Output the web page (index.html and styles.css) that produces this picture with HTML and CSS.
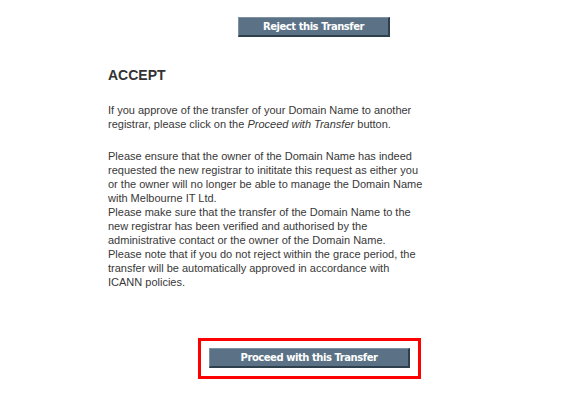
FILE: index.html
```html
<!DOCTYPE html>
<html>
<head>
<meta charset="utf-8">
<link rel="stylesheet" href="styles.css">
</head>
<body>
<div class="page">
  <div class="reject-row">
    <button class="btn btn-reject">Reject this Transfer</button>
  </div>
  <div class="content">
    <h2 class="title">ACCEPT</h2>
    <p class="para">If you approve of the transfer of your Domain Name to another<br>registrar, please click on the <i>Proceed with Transfer</i> button.</p>
    <p class="para">Please ensure that the owner of the Domain Name has indeed<br>requested the new registrar to inititate this request as either you<br>or the owner will no longer be able to manage the Domain Name<br>with Melbourne IT Ltd.<br>Please make sure that the transfer of the Domain Name to the<br>new registrar has been verified and authorised by the<br>administrative contact or the owner of the Domain Name.<br>Please note that if you do not reject within the grace period, the<br>transfer will be automatically approved in accordance with<br>ICANN policies.</p>
  </div>
  <div class="proceed-row">
    <div class="highlight">
      <button class="btn btn-proceed">Proceed with this Transfer</button>
    </div>
  </div>
</div>
</body>
</html>
```
FILE: styles.css
```css
html, body {
  margin: 0;
  padding: 0;
  background: #ffffff;
}
.page {
  width: 566px;
  height: 410px;
  font-family: "Liberation Sans", Arial, sans-serif;
  color: #383838;
}
.reject-row {
  padding: 17px 0 0 238px;
  display: flex;
}
.btn {
  box-sizing: border-box;
  font-family: "DejaVu Sans", Verdana, sans-serif;
  font-weight: bold;
  font-size: 10px;
  color: #ffffff;
  background: #5b7286;
  border-style: solid;
  border-width: 1px 2px 2px 1px;
  border-color: #7d93a4 #2e3f4e #2e3f4e #7d93a4;
  padding: 0;
  margin: 0;
  height: 20px;
  display: flex;
  align-items: center;
  justify-content: center;
  letter-spacing: -0.45px;
}
.btn-reject {
  width: 152px;
}
.content {
  padding-left: 108px;
}
.title {
  margin: 0;
  padding-top: 30px;
  font-size: 14px;
  line-height: 16px;
  font-weight: bold;
  color: #333333;
}
.para {
  margin: 20px 0 0 0;
  font-size: 11px;
  line-height: 14px;
}
.para + .para {
  margin-top: 18px;
}
.proceed-row {
  padding: 49px 0 0 198px;
  display: flex;
}
.highlight {
  border: 3px solid #ff0000;
  padding: 7px 8px 8px 8px;
  width: 201px;
}
.btn-proceed {
  width: 201px;
}
```
